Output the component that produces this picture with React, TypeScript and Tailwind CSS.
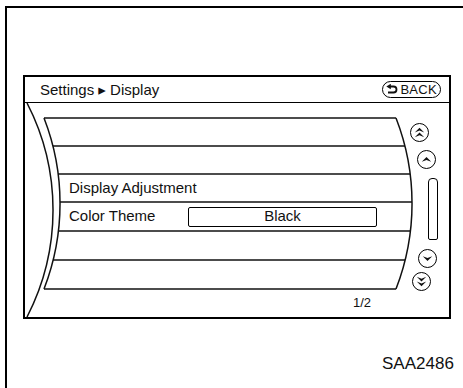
const font = { fontFamily: '"Liberation Sans", Arial, "DejaVu Sans", sans-serif' };

function Chevrons({ dir, double }: { dir: 'up' | 'down'; double?: boolean }) {
  const one = 'M4 11.5 L9 6.3 L14 11.5 L9 9.4 Z';
  const two = 'M4 9 L9 4 L14 9 L9 7 Z M4 14 L9 9 L14 14 L9 12 Z';
  return (
    <svg width="17" height="17" viewBox="0 0 18 18" className={dir === 'down' ? 'rotate-180' : ''}>
      <path d={double ? two : one} fill="#111" />
    </svg>
  );
}

function ScrollButton({ dir, double, className }: { dir: 'up' | 'down'; double?: boolean; className: string }) {
  return (
    <div
      className={`flex h-[19px] w-[19px] items-center justify-center rounded-full border-[1.5px] border-black ${className}`}
    >
      <Chevrons dir={dir} double={double} />
    </div>
  );
}

function BackButton() {
  return (
    <div className="flex h-[17px] items-center gap-[2px] rounded-full border-[1.5px] border-black pl-[3px] pr-[3px]">
      <svg width="12" height="11" viewBox="0 0 12 11">
        <path d="M4 2.5 H7.5 A3 3 0 0 1 7.5 8.5 H2" fill="none" stroke="#111" strokeWidth="1.8" />
        <path d="M0.3 2.5 L4.8 -0.2 L4.8 5.2 Z" fill="#111" />
      </svg>
      <span className="text-[13px] leading-none tracking-[0.3px] text-[#111]">BACK</span>
    </div>
  );
}

// curved frame of the list: two arcs on the left, one on the right, and the row lines
function ListFrame() {
  const lines: [number, number, number][] = [
    [15, 19, 371],
    [43, 28, 380],
    [71, 33, 385],
    [99, 35, 387],
    [128, 33, 385],
    [157, 28, 380],
    [186, 19, 371],
  ];
  return (
    <svg className="pointer-events-none absolute inset-0" width="424" height="214" viewBox="0 0 424 214">
      <g fill="none" stroke="#111" strokeWidth="1.5">
        <path d="M2 0 A233 233 0 0 1 2 214" />
        <path d="M19 15 A236 236 0 0 1 19 186" />
        <path d="M371 15 A236 236 0 0 1 371 186" />
        {lines.map(([y, x1, x2]) => (
          <line key={y} x1={x1} y1={y} x2={x2} y2={y} />
        ))}
      </g>
    </svg>
  );
}

export default function App() {
  return (
    <div className="h-[388px] w-[463px] overflow-hidden bg-white text-[#111]" style={font}>
      <div className="ml-[5px] mt-[6px] h-[400px] border-l-2 border-t-2 border-black">
        <div className="ml-[16px] mt-[67px] flex h-[244px] w-[428px] flex-col border-2 border-black">
          <div className="flex h-[26px] items-center justify-between border-b border-black pl-[15px] pr-[8px]">
            <span className="text-[15px] leading-none">Settings ▸ Display</span>
            <BackButton />
          </div>

          <div className="relative flex h-[214px]">
            <ListFrame />
            <div className="flex flex-1 flex-col pt-[15px]">
              <div className="h-[28px]" />
              <div className="h-[28px]" />
              <div className="flex h-[28px] items-center pl-[44px] text-[15px]">Display Adjustment</div>
              <div className="flex h-[29px] items-center pl-[44px] text-[15px]">
                <span className="w-[119px]">Color Theme</span>
                <div className="flex h-[20px] w-[189px] items-center justify-center rounded-[2px] border-[1.5px] border-black">
                  Black
                </div>
              </div>
              <div className="h-[29px]" />
              <div className="h-[29px]" />
              <div className="flex flex-1 items-center pl-[328px] text-[13px]">1/2</div>
            </div>

            <div className="flex w-[44px] flex-col pt-[20px]">
              <ScrollButton dir="up" double className="ml-[5px]" />
              <ScrollButton dir="up" className="mt-[8px] ml-[12px]" />
              <div className="mt-[9px] ml-[23px] h-[62px] w-[10px] rounded-t-[4px] rounded-b-[2px] border-[1.5px] border-black" />
              <ScrollButton dir="down" className="mt-[9px] ml-[13px]" />
              <ScrollButton dir="down" double className="mt-[4px] ml-[7px]" />
            </div>
          </div>
        </div>

        <div className="mt-[36px] pl-[375px] text-[17px] leading-none">SAA2486</div>
      </div>
    </div>
  );
}
